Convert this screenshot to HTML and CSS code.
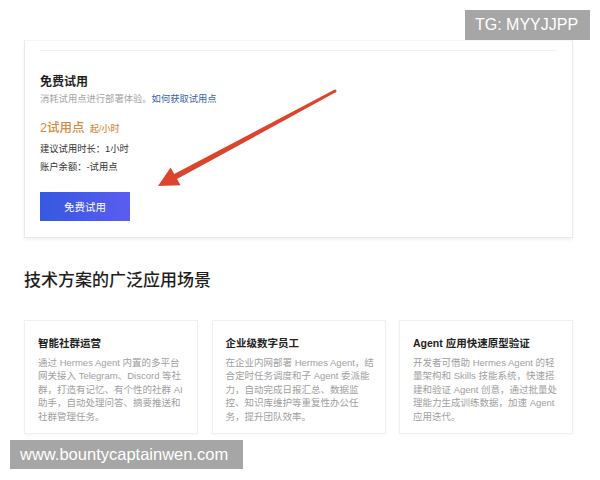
FILE: index.html
```html
<!DOCTYPE html>
<html lang="zh-CN">
<head>
<meta charset="utf-8">
<title>免费试用</title>
<link rel="stylesheet" href="styles.css">
</head>
<body>
<div class="page">
  <section class="trial-card">
    <div class="divider"></div>
    <h2 class="trial-title">免费试用</h2>
    <p class="trial-sub">消耗试用点进行部署体验。<a class="link" href="#">如何获取试用点</a></p>
    <p class="price">2试用点 <span class="unit">起/小时</span></p>
    <p class="meta">建议试用时长：1小时</p>
    <p class="meta">账户余额：-试用点</p>
    <button class="btn">免费试用</button>
  </section>

  <h1 class="section-title">技术方案的广泛应用场景</h1>

  <div class="scenes">
    <div class="scene">
      <h3 class="scene-title">智能社群运营</h3>
      <p class="scene-text">通过 Hermes Agent 内置的多平台<br>网关接入 Telegram、Discord 等社<br>群，打造有记忆、有个性的社群 AI<br>助手，自动处理问答、摘要推送和<br>社群管理任务。</p>
    </div>
    <div class="scene">
      <h3 class="scene-title">企业级数字员工</h3>
      <p class="scene-text">在企业内网部署 Hermes Agent，结<br>合定时任务调度和子 Agent 委派能<br>力，自动完成日报汇总、数据监<br>控、知识库维护等重复性办公任<br>务，提升团队效率。</p>
    </div>
    <div class="scene">
      <h3 class="scene-title">Agent 应用快速原型验证</h3>
      <p class="scene-text">开发者可借助 Hermes Agent 的轻<br>量架构和 Skills 技能系统，快速搭<br>建和验证 Agent 创意，通过批量处<br>理能力生成训练数据，加速 Agent<br>应用迭代。</p>
    </div>
  </div>
</div>

<svg class="arrow" width="600" height="480" viewBox="0 0 600 480">
  <polygon fill="#dc452c" points="334.3,89.7 174.2,173.9 170.6,167.6 158,186 180.6,185.2 177,179.1 335.7,92.3"/>
  <circle cx="335" cy="91" r="1.5" fill="#dc452c"/>
</svg>

<div class="wm wm-tg">TG: MYYJJPP</div>
<div class="wm wm-site">www.bountycaptainwen.com</div>
</body>
</html>
```

FILE: styles.css
```css
* { box-sizing: border-box; }
html, body { margin: 0; padding: 0; background: #fff; }
body {
  width: 600px;
  height: 480px;
  overflow: hidden;
  position: relative;
  font-family: "Liberation Sans", "Noto Sans CJK SC", sans-serif;
  color: #222;
}
.page { padding: 0 24px; }

.trial-card {
  margin-top: 40px;
  width: 549px;
  border: 1px solid #e9e9e9;
  border-top-color: #f6f6f6;
  box-shadow: 0 2px 3px rgba(0,0,0,0.05);
  padding: 0 15px 16px;
  display: flex;
  flex-direction: column;
  align-items: flex-start;
}
.divider {
  width: 100%;
  height: 10px;
  border-bottom: 1px solid #f1f1f1;
}
.trial-title {
  margin: 21px 0 0;
  font-size: 12px;
  line-height: 20px;
  font-weight: bold;
  color: #1f1f1f;
}
.trial-sub {
  margin: 0;
  font-size: 9.3px;
  line-height: 14px;
  color: #a6a6a6;
}
.link { color: #3c63ad; text-decoration: none; }
.price {
  margin: 12px 0 0;
  font-size: 12.5px;
  line-height: 20px;
  color: #d88a43;
  font-weight: 500;
}
.unit { font-size: 9px; margin-left: 2px; }
.meta {
  margin: 3px 0 0;
  font-size: 9.3px;
  line-height: 15px;
  color: #333;
}
.meta + .meta { margin-top: 3px; }
.btn {
  margin-top: 17px;
  width: 90px;
  height: 29px;
  border: none;
  padding: 0;
  background: linear-gradient(90deg, #3559df, #5b5cf0);
  color: #fff;
  font-family: inherit;
  font-size: 10.5px;
}

.section-title {
  margin: 31px 0 0;
  font-size: 17px;
  line-height: 24px;
  font-weight: 500;
  color: #1e1e1e;
}

.scenes {
  margin-top: 27px;
  display: grid;
  grid-template-columns: repeat(3, 174px);
  gap: 13.5px;
}
.scene {
  height: 114px;
  border: 1px solid #f0f0f0;
  box-shadow: 0 1px 3px rgba(0,0,0,0.04);
  padding: 14px 0 0 13px;
  overflow: hidden;
}
.scene-title {
  margin: 0;
  font-size: 10.5px;
  line-height: 16px;
  font-weight: bold;
  color: #222;
}
.scene-text {
  margin: 5px 0 0;
  font-size: 9.5px;
  line-height: 13.4px;
  color: #a0a0a0;
  white-space: nowrap;
}

.arrow {
  position: absolute;
  left: 0;
  top: 0;
  pointer-events: none;
}

.wm {
  position: absolute;
  background: #a6a6a6;
  color: #fff;
  font-size: 16.5px;
  font-family: "Liberation Sans", sans-serif;
  display: flex;
  align-items: center;
}
.wm-tg {
  left: 465px;
  top: 10px;
  width: 125px;
  height: 30px;
  padding-left: 10px;
  font-size: 16px;
}
.wm-site {
  left: 10px;
  top: 440px;
  width: 233px;
  height: 29px;
  padding-left: 10px;
}
```
